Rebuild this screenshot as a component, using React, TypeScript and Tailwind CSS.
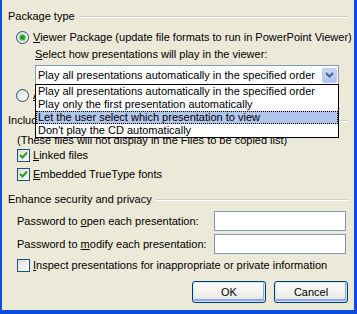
import React from "react";

const font = { fontFamily: '"Liberation Sans", Arial, sans-serif' };

const GroupHeader = ({ label }: { label: string }) => (
	<div className="flex items-center h-[13px]">
		<span className="whitespace-nowrap">{label}</span>
		<div className="flex-1 ml-[4px] h-[2px] border-t border-[#D0D0BF] border-b border-b-white" />
	</div>
);

const Radio = ({ checked }: { checked?: boolean }) => (
	<div className="flex items-center justify-center w-[13px] h-[13px] rounded-full border border-[#1C5180] bg-gradient-to-br from-[#DCDCD7] to-white shrink-0">
		{checked && (
			<div className="w-[5px] h-[5px] rounded-full bg-[#21A121] shadow-[0_0_0_1px_#8CD08C]" />
		)}
	</div>
);

const Check = ({ checked }: { checked?: boolean }) => (
	<div className="flex items-center justify-center w-[13px] h-[13px] border border-[#1C5180] bg-gradient-to-br from-[#DCDCD7] to-white shrink-0">
		{checked && (
			<svg width="9" height="9" viewBox="0 0 9 9">
				<path d="M1 4 L3.5 6.5 L8 1.5" fill="none" stroke="#21A121" strokeWidth="2" />
			</svg>
		)}
	</div>
);

const Button = ({ children }: { children: React.ReactNode }) => (
	<button className="w-[74px] h-[22px] rounded-[3px] border border-[#003C74] bg-gradient-to-b from-white to-[#E6E5DE] shadow-[inset_0_0_0_1px_#CEE7FF,inset_-1px_-2px_0_1px_#8CA8EC] text-black">
		{children}
	</button>
);

const options = [
	"Play all presentations automatically in the specified order",
	"Play only the first presentation automatically",
	"Let the user select which presentation to view",
	"Don't play the CD automatically",
];

export default function App() {
	return (
		<div
			className="w-[357px] h-[314px] overflow-hidden border-l-2 border-r-[3px] border-b-4 border-[#0A4DDE] bg-[#ECE9D8] text-[11px] leading-[13px] text-black"
			style={font}
		>
			<div className="flex flex-col px-[6px]">
				<div className="mt-[10px]">
					<GroupHeader label="Package type" />
				</div>

				<div className="flex items-center mt-[8px] ml-[8px] h-[13px]">
					<Radio checked />
					<span className="ml-[4px] whitespace-nowrap">
						<u>V</u>iewer Package (update file formats to run in PowerPoint Viewer)
					</span>
				</div>

				<div className="mt-[4px] ml-[27px] h-[13px] whitespace-nowrap">
					<u>S</u>elect how presentations will play in the viewer:
				</div>

				<div className="relative mt-[4px] ml-[27px] w-[304px] h-[20px] border border-[#7F9DB9] bg-white flex items-center">
					<span className="pl-[2px] whitespace-nowrap flex-1">{options[0]}</span>
					<div className="flex items-center justify-center w-[15px] h-[15px] mr-[1px] rounded-[2px] border border-[#B9CBF3] bg-gradient-to-b from-[#C8D8FC] to-[#B0C5F4]">
						<svg width="9" height="6" viewBox="0 0 9 6">
							<path d="M1 1 L4.5 4.5 L8 1" fill="none" stroke="#4D6185" strokeWidth="2" />
						</svg>
					</div>

					<div className="absolute left-[-1px] top-[18px] w-[304px] border border-black bg-white z-10">
						{options.map((o, i) => (
							<div
								key={o}
								className={
									i === 2
										? "h-[13px] pl-[2px] whitespace-nowrap bg-[#B2C5EB] outline-1 outline-dotted outline-offset-[-1px] outline-black"
										: "h-[13px] pl-[2px] whitespace-nowrap"
								}
							>
								{o}
							</div>
						))}
					</div>
				</div>

				<div className="flex items-center mt-[4px] ml-[8px] h-[13px]">
					<Radio />
					<span className="ml-[4px] whitespace-nowrap">
						<u>A</u>rchive Package (do not update file formats)
					</span>
				</div>

				<div className="mt-[12px]">
					<GroupHeader label="Include files" />
				</div>

				<div className="mt-[7px] ml-[9px] h-[13px] whitespace-nowrap">
					(These files will not display in the Files to be copied list)
				</div>

				<div className="flex items-center mt-[2px] ml-[9px] h-[13px]">
					<Check checked />
					<span className="ml-[3px]">
						<u>L</u>inked files
					</span>
				</div>

				<div className="flex items-center mt-[6px] ml-[9px] h-[13px]">
					<Check checked />
					<span className="ml-[3px]">
						<u>E</u>mbedded TrueType fonts
					</span>
				</div>

				<div className="mt-[12px]">
					<GroupHeader label="Enhance security and privacy" />
				</div>

				<div className="flex items-center justify-between mt-[5px] ml-[9px] h-[20px]">
					<span className="whitespace-nowrap">
						Password to <u>o</u>pen each presentation:
					</span>
					<div className="w-[132px] h-[20px] mr-[2px] border border-[#7F9DB9] bg-white" />
				</div>

				<div className="flex items-center justify-between mt-[3px] ml-[9px] h-[20px]">
					<span className="whitespace-nowrap">
						Password to <u>m</u>odify each presentation:
					</span>
					<div className="w-[132px] h-[20px] mr-[2px] border border-[#7F9DB9] bg-white" />
				</div>

				<div className="flex items-center mt-[5px] ml-[9px] h-[13px]">
					<Check />
					<span className="ml-[3px] whitespace-nowrap">
						<u>I</u>nspect presentations for inappropriate or private information
					</span>
				</div>

				<div className="flex justify-end gap-[8px] mt-[9px]">
					<Button>OK</Button>
					<Button>Cancel</Button>
				</div>
			</div>
		</div>
	);
}
